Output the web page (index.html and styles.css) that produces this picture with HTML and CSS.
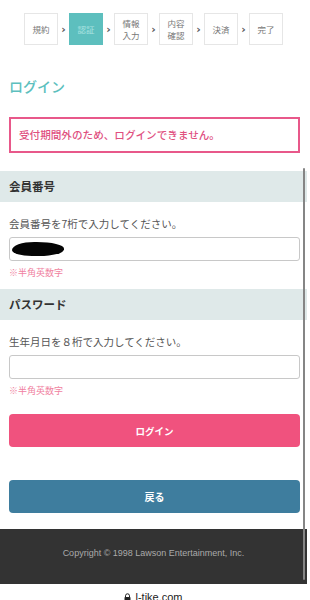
FILE: index.html
```html
<!DOCTYPE html>
<html lang="ja">
<head>
  <meta charset="UTF-8">
  <title>ログイン</title>
  <link rel="stylesheet" href="styles.css">
</head>
<body>
  <div class="page">
    <ol class="steps">
      <li class="step">規約</li>
      <li class="arrow">›</li>
      <li class="step current">認証</li>
      <li class="arrow">›</li>
      <li class="step">情報<br>入力</li>
      <li class="arrow">›</li>
      <li class="step">内容<br>確認</li>
      <li class="arrow">›</li>
      <li class="step">決済</li>
      <li class="arrow">›</li>
      <li class="step">完了</li>
    </ol>

    <h1 class="title">ログイン</h1>

    <div class="error">受付期間外のため、ログインできません。</div>

    <div class="field">
      <h2 class="field-head">会員番号</h2>
      <div class="field-body">
        <p class="desc">会員番号を7桁で入力してください。</p>
        <div class="input"><span class="redact"></span></div>
        <p class="note">※半角英数字</p>
      </div>
    </div>

    <div class="field">
      <h2 class="field-head">パスワード</h2>
      <div class="field-body">
        <p class="desc">生年月日を８桁で入力してください。</p>
        <div class="input"></div>
        <p class="note">※半角英数字</p>
      </div>
    </div>

    <div class="buttons">
      <button class="btn btn-login">ログイン</button>
      <button class="btn btn-back">戻る</button>
    </div>

    <footer class="footer">Copyright © 1998 Lawson Entertainment, Inc.</footer>

    <div class="url">
      <svg width="7" height="9" viewBox="0 0 7 9"><path d="M1.5 4V2.8a2 2 0 0 1 4 0V4" fill="none" stroke="#222" stroke-width="1"/><rect x="0.5" y="4" width="6" height="4.5" rx="0.8" fill="#222"/></svg>
      <span>l-tike.com</span>
    </div>

    <div class="scrollbar"></div>
  </div>
</body>
</html>
```

FILE: styles.css
```css
body {
  margin: 0;
  background: #fff;
  font-family: "Noto Sans CJK JP", "Noto Sans", sans-serif;
  color: #333;
}

.page {
  width: 307px;
  position: relative;
  height: 600px;
  overflow: hidden;
}

.steps {
  list-style: none;
  margin: 0;
  padding: 13px 0 0;
  display: flex;
  justify-content: center;
}

.step {
  width: 34px;
  height: 32px;
  box-sizing: border-box;
  border: 1px solid #e6e6e6;
  display: flex;
  align-items: center;
  justify-content: center;
  text-align: center;
  font-size: 8.5px;
  line-height: 12px;
  color: #777;
}

.step.current {
  background: #5dbfbe;
  border-color: #5dbfbe;
  color: #a9e2e0;
}

.arrow {
  width: 11px;
  display: flex;
  align-items: center;
  justify-content: center;
  font-size: 11px;
  font-weight: bold;
  color: #555;
  font-family: "DejaVu Sans", sans-serif;
}

.title {
  margin: 31px 0 0;
  padding: 0 9px;
  font-size: 14px;
  line-height: 20px;
  font-weight: 500;
  color: #5dbfbe;
}

.error {
  margin: 21px 7px 0 9px;
  border: 2px solid #e8588a;
  padding: 8px 8px;
  font-size: 10.6px;
  line-height: 16px;
  font-weight: 500;
  color: #e0507f;
}

.field {
  margin-top: 18px;
}

.field + .field {
  margin-top: 10px;
}

.field-head {
  margin: 0;
  height: 31px;
  line-height: 31px;
  padding: 0 9px;
  background: #dfe9e9;
  font-size: 11.5px;
  font-weight: bold;
  color: #333;
}

.field-body {
  padding: 0 7px 0 9px;
}

.desc {
  margin: 14px 0 0;
  font-size: 10.5px;
  line-height: 16px;
  color: #555;
}

.input {
  margin-top: 5px;
  height: 24px;
  box-sizing: border-box;
  border: 1px solid #c8c8c8;
  border-radius: 3px;
  display: flex;
  align-items: center;
  padding-left: 2px;
}

.redact {
  width: 52px;
  height: 14px;
  background: #050505;
  border-radius: 45% 55% 50% 40% / 60% 50% 50% 45%;
}

.note {
  margin: 6px 0 0;
  font-size: 9px;
  line-height: 12px;
  color: #f07fa0;
}

.buttons {
  padding: 17px 7px 0 9px;
  display: flex;
  flex-direction: column;
  gap: 33px;
}

.btn {
  height: 33px;
  border: none;
  border-radius: 4px;
  color: #fff;
  font-family: inherit;
  font-weight: bold;
  font-size: 9.5px;
  padding: 0;
}

.btn-login {
  background: #f0527e;
}

.btn-back {
  background: #3e7d9e;
  font-size: 10px;
}

.footer {
  margin-top: 16px;
  background: #333;
  color: #aaa;
  text-align: center;
  font-family: "Liberation Sans", Arial, sans-serif;
  font-size: 9px;
  line-height: 12px;
  padding: 18px 0 25px;
}

.url {
  display: flex;
  justify-content: center;
  align-items: center;
  gap: 4px;
  padding-top: 7px;
  font-family: "Liberation Sans", Arial, sans-serif;
  font-size: 11px;
  line-height: 13px;
  color: #222;
}

.scrollbar {
  position: absolute;
  left: 303px;
  top: 168px;
  width: 2px;
  height: 412px;
  background: #858585;
  border-radius: 1px;
}
```
